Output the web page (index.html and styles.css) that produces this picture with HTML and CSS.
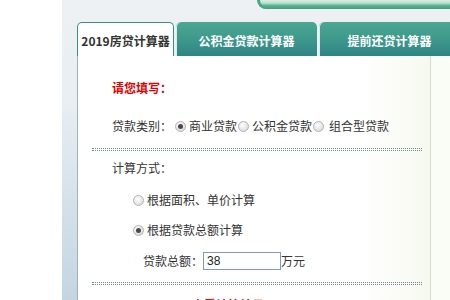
FILE: index.html
```html
<!DOCTYPE html>
<html lang="zh-CN">
<head>
<meta charset="utf-8">
<title>房贷计算器</title>
<link rel="stylesheet" href="styles.css">
</head>
<body>
<div class="page">
  <div class="gutter"></div>
  <div class="main">
    <div class="topbar-row"><div class="topbar"></div></div>
    <div class="tabs">
      <div class="tab active">2019房贷计算器</div>
      <div class="tab tab-wide">公积金贷款计算器</div>
      <div class="tab tab-wide">提前还贷计算器</div>
    </div>
    <div class="panel">
      <div class="form">
        <div class="heading">请您填写：</div>
        <div class="row row-type">
          <span class="label">贷款类别：</span>
          <span class="radio checked"></span><span class="opt">商业贷款</span>
          <span class="radio tight"></span><span class="opt">公积金贷款</span>
          <span class="radio tight"></span><span class="opt wide">组合型贷款</span>
        </div>
        <div class="sep"></div>
        <div class="row row-method">
          <span class="label">计算方式：</span>
        </div>
        <div class="row row-choice first">
          <span class="radio"></span><span class="opt">根据面积、单价计算</span>
        </div>
        <div class="row row-choice second">
          <span class="radio checked"></span><span class="opt">根据贷款总额计算</span>
        </div>
        <div class="row row-amount">
          <span class="label">贷款总额：</span><span class="input">38</span><span class="unit">万元</span>
        </div>
        <div class="sep sep-2"></div>
        <div class="row row-result">
          <span class="result">查看计算结果</span>
        </div>
      </div>
      <div class="side"></div>
    </div>
  </div>
</div>
</body>
</html>
```

FILE: styles.css
```css
html, body {
  margin: 0;
  padding: 0;
  background: #ffffff;
  width: 450px;
  height: 300px;
  overflow: hidden;
  font-family: "Noto Sans CJK SC", "Liberation Sans", sans-serif;
  font-size: 12px;
  color: #333333;
}

.page {
  display: flex;
  width: 450px;
  height: 300px;
}

.gutter {
  width: 62px;
  flex: none;
  background: #ffffff;
}

.main {
  flex: 1;
  min-width: 0;
  overflow: hidden;
  padding-left: 15px;
  display: flex;
  flex-direction: column;
  background: linear-gradient(to bottom, #edf1f4 0, #e8eef2 35%, #d6e2ea 65%, #c4d5e2 100%);
}

.topbar-row {
  height: 9px;
  flex: none;
  padding-left: 180px;
}

.topbar {
  height: 9px;
  width: 220px;
  border-radius: 0 0 0 10px;
  background: linear-gradient(to bottom, #d9efe4 0, #b8e0cc 35%, #5db595 60%, #3f9c7e 100%);
  box-shadow: inset 3px 0 0 #4aa585;
}

.tabs {
  margin-top: 13px;
  height: 34px;
  flex: none;
  display: flex;
  gap: 2px;
}

.tab {
  flex: none;
  box-sizing: border-box;
  height: 34px;
  display: flex;
  align-items: center;
  justify-content: center;
  font-weight: bold;
  font-size: 12px;
  border-radius: 5px 5px 0 0;
  white-space: nowrap;
}

.tab.active {
  width: 97px;
  background: #ffffff;
  color: #333333;
  border: 1px solid #3b8d88;
  border-bottom: none;
  padding-top: 2px;
}

.tab-wide {
  width: 141px;
  color: #ffffff;
  background: linear-gradient(to bottom, #4ba792 0, #3e998b 50%, #2f8485 100%);
  box-shadow: inset 1px 0 0 #d8eee6;
  padding-top: 2px;
}

.panel {
  flex: 1;
  display: flex;
  border-left: 1px solid #9fb2ba;
}

.form {
  width: 352px;
  flex: none;
  border-right: 1px solid #d2ddc8;
  background: linear-gradient(to right, #ffffff 0, #ffffff 80%, #f6f9ef 100%);
}

.side {
  flex: 1;
  background: #fafcf6;
}

.heading {
  margin-top: 22px;
  padding-left: 34px;
  height: 20px;
  line-height: 20px;
  color: #e30000;
  font-weight: bold;
}

.row {
  display: flex;
  align-items: center;
  height: 20px;
  line-height: 20px;
  white-space: nowrap;
}

.row-type {
  margin-top: 18px;
  padding-left: 34px;
}

.row-method {
  margin-top: 7px;
  padding-left: 34px;
}

.row-choice {
  padding-left: 55px;
}

.row-choice.first {
  margin-top: 12px;
}

.row-choice.second {
  margin-top: 10px;
}

.row-amount {
  margin-top: 11px;
  padding-left: 65px;
}

.row-result {
  margin-top: 10px;
  padding-left: 114px;
}

.result {
  color: #e30000;
  font-weight: bold;
}

.radio {
  flex: none;
  box-sizing: border-box;
  width: 11px;
  height: 11px;
  border-radius: 50%;
  border: 1px solid #b4b4b4;
  background: radial-gradient(circle at 40% 35%, #ffffff 0, #e6e6e6 55%, #cfcfcf 100%);
  margin-left: 3px;
  position: relative;
}

.radio.tight {
  margin-left: 1px;
}

.row-choice .radio {
  margin-left: 0;
}

.radio.checked::after {
  content: "";
  position: absolute;
  left: 2px;
  top: 2px;
  width: 5px;
  height: 5px;
  border-radius: 50%;
  background: #4a4a4a;
}

.opt {
  margin-left: 3px;
}

.opt.wide {
  margin-left: 5px;
}

.sep {
  margin: 12px 8px 0 14px;
  height: 1px;
  border-top: 1px dotted #6f8c8c;
  border-bottom: 1px dotted #6f8c8c;
}

.sep-2 {
  margin-top: 11px;
}

.input {
  box-sizing: border-box;
  width: 78px;
  height: 18px;
  line-height: 16px;
  border: 1px solid #7f9db9;
  padding-left: 3px;
  font-family: "Liberation Sans", "Noto Sans CJK SC", sans-serif;
  font-size: 12px;
  color: #222222;
  background: #ffffff;
}

.unit {
  margin-left: 0;
}
```
